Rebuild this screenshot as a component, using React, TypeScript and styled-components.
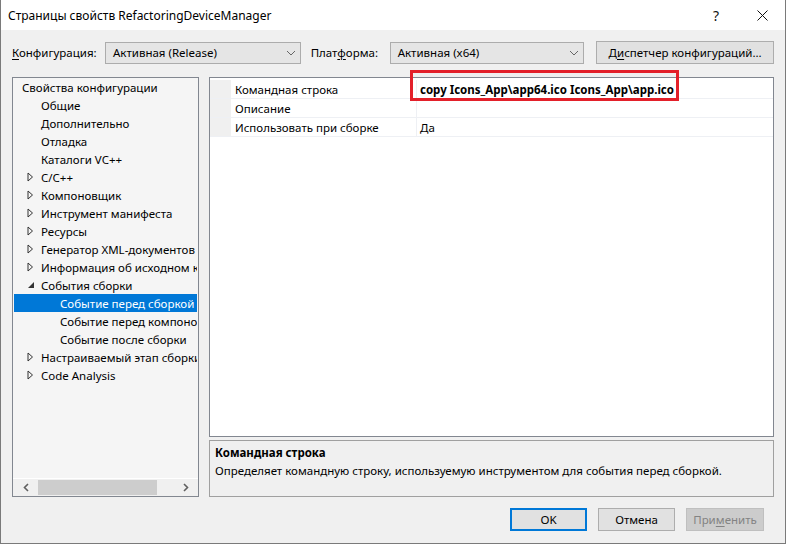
import React from "react";
import styled, { createGlobalStyle } from "styled-components";

const Global = createGlobalStyle`
  html, body { margin: 0; padding: 0; background: #f0f0f0; }
  * { box-sizing: border-box; }
  body { font-family: "Noto Sans", "Segoe UI", sans-serif; font-size: 11.5px; color: #000; }
`;

const Window = styled.div`
  width: 786px;
  height: 544px;
  border: 1px solid #7a7a7a;
  border-top: none;
  display: flex;
  flex-direction: column;
  background: #f0f0f0;
`;

const TitleBar = styled.div`
  height: 30px;
  background: #fff;
  display: flex;
  align-items: center;
  padding-left: 7px;
  flex-shrink: 0;
`;

const Title = styled.div`
  flex: 1;
  font-size: 12px;
`;

const TitleBtn = styled.div`
  width: 46px;
  height: 30px;
  display: flex;
  align-items: center;
  justify-content: center;
  font-size: 14px;
  color: #111;
`;

const Body = styled.div`
  flex: 1;
  display: flex;
  flex-direction: column;
  padding: 11px 11px 0 11px;
`;

const Toolbar = styled.div`
  display: flex;
  align-items: center;
  height: 23px;
`;

const Label = styled.span<{ $w: number }>`
  width: ${(p) => p.$w}px;
  flex-shrink: 0;
`;

const U = styled.span`
  text-decoration: underline;
  text-underline-offset: 2px;
`;

const Combo = styled.div<{ $w: number; $mr: number }>`
  width: ${(p) => p.$w}px;
  margin-right: ${(p) => p.$mr}px;
  height: 22px;
  border: 1px solid #acacac;
  background: #e5e5e5;
  display: flex;
  align-items: center;
  padding-left: 7px;
  padding-right: 4px;
  justify-content: space-between;
`;

const Button = styled.div<{ $variant?: "default" | "primary" | "disabled"; $w: number }>`
  width: ${(p) => p.$w}px;
  height: 23px;
  display: flex;
  align-items: center;
  justify-content: center;
  background: ${(p) => (p.$variant === "disabled" ? "#cccccc" : "#e1e1e1")};
  border: ${(p) =>
    p.$variant === "primary"
      ? "2px solid #0078d7"
      : p.$variant === "disabled"
      ? "1px solid #bfbfbf"
      : "1px solid #adadad"};
  color: ${(p) => (p.$variant === "disabled" ? "#838383" : "#000")};
`;

const Main = styled.div`
  display: flex;
  margin-top: 13px;
  gap: 10px;
  height: 420px;
`;

const Tree = styled.div`
  width: 187px;
  height: 420px;
  border: 1px solid #828790;
  background: #f5f5f5;
  display: flex;
  flex-direction: column;
  overflow: hidden;
`;

const TreeList = styled.div`
  flex: 1;
  padding: 0 1px;
`;

const TreeRow = styled.div<{ $indent: number; $selected?: boolean }>`
  height: 18px;
  display: flex;
  align-items: center;
  white-space: nowrap;
  overflow: hidden;
  padding-left: ${(p) => p.$indent}px;
  background: ${(p) => (p.$selected ? "#0078d7" : "transparent")};
  color: ${(p) => (p.$selected ? "#fff" : "#000")};
`;

const Arrow = styled.span`
  width: 14px;
  flex-shrink: 0;
  margin-left: -14px;
  display: inline-flex;
  align-items: center;
  justify-content: flex-start;
`;

const HScroll = styled.div`
  height: 18px;
  border-top: 1px solid #fff;
  background: #f0f0f0;
  display: flex;
  align-items: center;
  padding: 0 4px;
`;

const ScrollBtn = styled.div`
  width: 17px;
  display: flex;
  align-items: center;
  justify-content: center;
`;

const Track = styled.div`
  flex: 1;
  height: 15px;
  display: flex;
  padding-left: 4px;
`;

const Thumb = styled.div`
  width: 119px;
  height: 15px;
  background: #cdcdcd;
`;

const RightCol = styled.div`
  flex: 1;
  display: flex;
  flex-direction: column;
  gap: 3px;
  position: relative;
`;

const Grid = styled.div`
  height: 360px;
  border: 1px solid #828790;
  background: #fff;
  padding-top: 2px;
`;

const GridRow = styled.div`
  display: flex;
  height: 19px;
  border-bottom: 1px solid #eef0f4;
`;

const Gutter = styled.div`
  width: 21px;
  background: #f0f0f0;
`;

const NameCell = styled.div`
  width: 186px;
  padding-left: 4px;
  display: flex;
  align-items: center;
  border-right: 1px solid #eef0f4;
`;

const ValueCell = styled.div<{ $bold?: boolean }>`
  flex: 1;
  padding-left: 3px;
  display: flex;
  align-items: center;
  font-weight: ${(p) => (p.$bold ? 700 : 400)};
`;

const Highlight = styled.div`
  position: absolute;
  left: 201px;
  top: -7px;
  width: 269px;
  height: 31px;
  border: 3px solid #e3202a;
  pointer-events: none;
`;

const Desc = styled.div`
  height: 57px;
  border: 1px solid #a0a0a0;
  background: #f0f0f0;
  padding: 3px 5px;
  display: flex;
  flex-direction: column;
  gap: 1px;
`;

const DescTitle = styled.div`
  font-weight: 700;
  line-height: 17px;
`;

const DescText = styled.div`
  line-height: 17px;
`;

const Footer = styled.div`
  display: flex;
  justify-content: flex-end;
  gap: 11px;
  margin-top: 11px;
  padding-right: 10px;
`;

const Hollow = () => (
  <svg width="7" height="10" viewBox="0 0 7 10">
    <path d="M1 1 L5.5 5 L1 9 Z" fill="none" stroke="#333" strokeWidth="1" />
  </svg>
);

const Filled = () => (
  <svg width="8" height="10" viewBox="0 0 8 10">
    <path d="M1 8 L7 8 L7 2 Z" fill="#333" />
  </svg>
);

const Chevron = () => (
  <svg width="10" height="6" viewBox="0 0 10 6">
    <path d="M1 1 L5 5 L9 1" fill="none" stroke="#666" strokeWidth="1" />
  </svg>
);

const SmallChevron = ({ dir }: { dir: "l" | "r" }) => (
  <svg width="6" height="9" viewBox="0 0 6 9">
    <path
      d={dir === "l" ? "M5 1 L1.5 4.5 L5 8" : "M1 1 L4.5 4.5 L1 8"}
      fill="none"
      stroke="#606060"
      strokeWidth="1.6"
    />
  </svg>
);

type Item = { text: string; level: number; arrow?: "hollow" | "filled"; selected?: boolean };

const items: Item[] = [
  { text: "Свойства конфигурации", level: 0 },
  { text: "Общие", level: 1 },
  { text: "Дополнительно", level: 1 },
  { text: "Отладка", level: 1 },
  { text: "Каталоги VC++", level: 1 },
  { text: "C/C++", level: 1, arrow: "hollow" },
  { text: "Компоновщик", level: 1, arrow: "hollow" },
  { text: "Инструмент манифеста", level: 1, arrow: "hollow" },
  { text: "Ресурсы", level: 1, arrow: "hollow" },
  { text: "Генератор XML-документов", level: 1, arrow: "hollow" },
  { text: "Информация об исходном коде", level: 1, arrow: "hollow" },
  { text: "События сборки", level: 1, arrow: "filled" },
  { text: "Событие перед сборкой", level: 2, selected: true },
  { text: "Событие перед компоновкой", level: 2 },
  { text: "Событие после сборки", level: 2 },
  { text: "Настраиваемый этап сборки", level: 1, arrow: "hollow" },
  { text: "Code Analysis", level: 1, arrow: "hollow" },
];

const indents = [8, 27, 46];

const rows = [
  { name: "Командная строка", value: "copy Icons_App\\app64.ico Icons_App\\app.ico", bold: true },
  { name: "Описание", value: "" },
  { name: "Использовать при сборке", value: "Да" },
];

export default function App() {
  return (
    <>
      <Global />
      <Window>
        <TitleBar>
          <Title>Страницы свойств RefactoringDeviceManager</Title>
          <TitleBtn>?</TitleBtn>
          <TitleBtn>
            <svg width="11" height="11" viewBox="0 0 11 11">
              <path d="M0.5 0.5 L10.5 10.5 M10.5 0.5 L0.5 10.5" stroke="#111" strokeWidth="1" />
            </svg>
          </TitleBtn>
        </TitleBar>
        <Body>
          <Toolbar>
            <Label $w={93}>
              <U>К</U>онфигурация:
            </Label>
            <Combo $w={196} $mr={10}>
              <span>Активная (Release)</span>
              <Chevron />
            </Combo>
            <Label $w={79}>
              Плат<U>ф</U>орма:
            </Label>
            <Combo $w={195} $mr={12}>
              <span>Активная (x64)</span>
              <Chevron />
            </Combo>
            <Button $w={178}>
              <span>
                Д<U>и</U>спетчер конфигураций...
              </span>
            </Button>
          </Toolbar>
          <Main>
            <Tree>
              <TreeList>
                {items.map((it, i) => (
                  <TreeRow key={i} $indent={indents[it.level]} $selected={it.selected}>
                    {it.arrow && (
                      <Arrow>{it.arrow === "hollow" ? <Hollow /> : <Filled />}</Arrow>
                    )}
                    {it.text}
                  </TreeRow>
                ))}
              </TreeList>
              <HScroll>
                <ScrollBtn>
                  <SmallChevron dir="l" />
                </ScrollBtn>
                <Track>
                  <Thumb />
                </Track>
                <ScrollBtn>
                  <SmallChevron dir="r" />
                </ScrollBtn>
              </HScroll>
            </Tree>
            <RightCol>
              <Grid>
                {rows.map((r, i) => (
                  <GridRow key={i}>
                    <Gutter />
                    <NameCell>{r.name}</NameCell>
                    <ValueCell $bold={r.bold}>{r.value}</ValueCell>
                  </GridRow>
                ))}
              </Grid>
              <Desc>
                <DescTitle>Командная строка</DescTitle>
                <DescText>
                  Определяет командную строку, используемую инструментом для события перед сборкой.
                </DescText>
              </Desc>
              <Highlight />
            </RightCol>
          </Main>
          <Footer>
            <Button $w={77} $variant="primary">OK</Button>
            <Button $w={77}>Отмена</Button>
            <Button $w={78} $variant="disabled">
              <span>
                При<U>м</U>енить
              </span>
            </Button>
          </Footer>
        </Body>
      </Window>
    </>
  );
}
